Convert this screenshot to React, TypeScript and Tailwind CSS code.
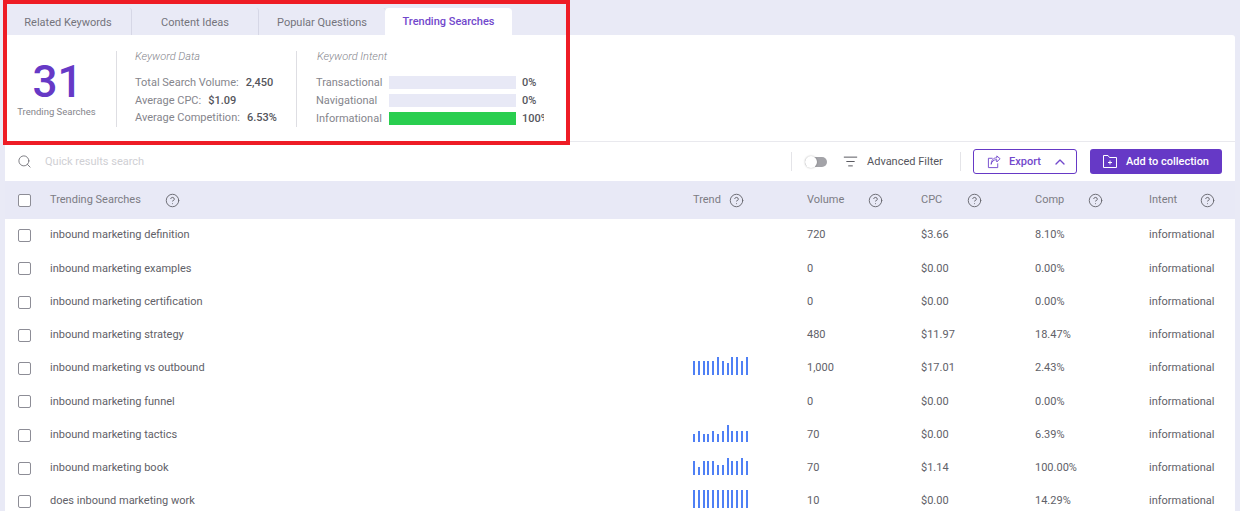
import { ChevronUp, CircleHelp, ListFilter, Search } from "lucide-react"
import type { ReactElement } from "react"

const tabs: string[] = ["Related Keywords", "Content Ideas", "Popular Questions"]

const rows: { name: string, bars: number[], volume: string, cpc: string, comp: string }[] = [
  { name: "inbound marketing definition", bars: [], volume: "720", cpc: "$3.66", comp: "8.10%" },
  { name: "inbound marketing examples", bars: [], volume: "0", cpc: "$0.00", comp: "0.00%" },
  { name: "inbound marketing certification", bars: [], volume: "0", cpc: "$0.00", comp: "0.00%" },
  { name: "inbound marketing strategy", bars: [], volume: "480", cpc: "$11.97", comp: "18.47%" },
  { name: "inbound marketing vs outbound", bars: [14, 14, 14, 14, 14, 18, 14, 12, 18, 18, 14, 18], volume: "1,000", cpc: "$17.01", comp: "2.43%" },
  { name: "inbound marketing funnel", bars: [], volume: "0", cpc: "$0.00", comp: "0.00%" },
  { name: "inbound marketing tactics", bars: [8, 11, 8, 8, 11, 8, 11, 17, 11, 11, 11, 11], volume: "70", cpc: "$0.00", comp: "6.39%" },
  { name: "inbound marketing book", bars: [14, 8, 14, 14, 14, 10, 10, 17, 14, 14, 17, 14], volume: "70", cpc: "$1.14", comp: "100.00%" },
  { name: "does inbound marketing work", bars: [18, 18, 18, 18, 18, 18, 18, 18, 18, 18, 18, 18], volume: "10", cpc: "$0.00", comp: "14.29%" },
]

const intents: { label: string, value: string, fill: string }[] = [
  { label: "Transactional", value: "0%", fill: "bg-[#e8e9f6]" },
  { label: "Navigational", value: "0%", fill: "bg-[#e8e9f6]" },
  { label: "Informational", value: "100%", fill: "bg-[#29ce4f]" },
]

function Help({ className }: { className: string }): ReactElement {
  return <CircleHelp size={15} strokeWidth={1.5} className={`text-[#66666e] ${className}`} />
}

function Checkbox(): ReactElement {
  return <span className="block w-[13px] h-[13px] rounded-[2px] border border-[#8d8d96] bg-white"></span>
}

function ExportIcon(): ReactElement {
  return (
    <svg width="14" height="14" viewBox="0 0 15 15" fill="none" stroke="currentColor" strokeWidth="1">
      <path d="M6 3.5H1.5V13.5H11.5V9" />
      <path d="M4.5 10C5 7 7 5 10.5 5V7.5L14 4L10.5 1V3C6.5 3 4.5 6 4.5 10Z" strokeLinejoin="round" />
    </svg>
  )
}

function FolderIcon(): ReactElement {
  return (
    <svg width="14" height="13" viewBox="0 0 14 13" fill="none" stroke="currentColor" strokeWidth="1">
      <path d="M0.5 12.5V0.5H5L6.5 2.5H13.5V12.5Z" />
      <path d="M7 5.5V9.5M5 7.5H9" />
    </svg>
  )
}

export default function App(): ReactElement {
  return (
    <div className="relative w-[1240px] h-[511px] overflow-hidden bg-[#e9eaf6] px-[5px] font-['Roboto',sans-serif] text-[11px] text-[#616168]">
      <div className="flex h-[35px] pt-[8px]">
        {tabs.map((tab) => (
          <div key={tab} className="w-[127px] flex items-center justify-center pt-[3px] text-[#74747c] border-r border-[#d6d7e6] rounded-t-[3px]">{tab}</div>
        ))}
        <div className="w-[127px] flex items-center justify-center pt-[1px] bg-white rounded-t-[4px] font-medium text-[#7248cc] ml-[-1px]">Trending Searches</div>
      </div>

      <div className="bg-white h-[476px] rounded-tr-[3px]">
        <section className="flex h-[107px] border-b border-[#e9e9ee] pt-[16px]">
          <div className="w-[111px] h-[76px] pr-[8px] flex flex-col items-center">
            <div className="text-[44px] leading-[44px] mt-[9px] ml-[2px] font-medium text-[#6639c6]">31</div>
            <div className="text-[9.5px] leading-[12px] mt-[2px] text-[#85858c]">Trending Searches</div>
          </div>
          <div className="w-[180px] h-[76px] border-l border-[#dedee3] pl-[18px]">
            <div className="italic font-light leading-[12px] text-[#85858c] mb-[11px]">Keyword Data</div>
            <div className="leading-[17.5px] text-[#85858c]">Total Search Volume:<span className="font-medium text-[#55555c] ml-[7px]">2,450</span></div>
            <div className="leading-[17.5px] text-[#85858c]">Average CPC:<span className="font-medium text-[#55555c] ml-[7px]">$1.09</span></div>
            <div className="leading-[17.5px] text-[#85858c]">Average Competition:<span className="font-medium text-[#55555c] ml-[7px]">6.53%</span></div>
          </div>
          <div className="w-[248px] h-[76px] border-l border-[#dedee3] pl-[20px] overflow-hidden">
            <div className="italic font-light leading-[12px] text-[#85858c] mb-[13px]">Keyword Intent</div>
            <div className="flex flex-col gap-[5px]">
              {intents.map((intent) => (
                <div key={intent.label} className="flex items-center h-[13px] ml-[-1px]">
                  <span className="w-[73px] shrink-0 pt-[1px] text-[#85858c]">{intent.label}</span>
                  <span className={`w-[127px] shrink-0 h-[13px] ${intent.fill}`}></span>
                  <span className="ml-[6px] shrink-0 pt-[1px] font-medium text-[#55555c]">{intent.value}</span>
                </div>
              ))}
            </div>
          </div>
        </section>

        <div className="flex items-center h-[39px] px-[13px]">
          <Search size={15} strokeWidth={1.5} className="ml-[-1px] text-[#77777e]" />
          <span className="ml-[13px] pt-[1px] text-[#cfcfd4]">Quick results search</span>
          <span className="ml-auto h-[19px] border-l border-[#e4e4e8]"></span>
          <span className="relative ml-[13px] w-[22px] h-[10px] rounded-full bg-[#a3a3a8]">
            <span className="absolute left-0 top-[-1px] w-[12px] h-[12px] rounded-full bg-white shadow-[0_0_2px_rgba(0,0,0,0.3)]"></span>
          </span>
          <ListFilter size={15} strokeWidth={1.5} className="ml-[16px] text-[#4f4f56]" />
          <span className="ml-[9px] w-[76px] pt-[1px] text-[#55555c]">Advanced Filter</span>
          <span className="ml-[17px] h-[19px] border-l border-[#e4e4e8]"></span>
          <button className="ml-[12px] w-[104px] h-[25px] flex items-center pl-[13px] border border-[#6639c6] rounded-[3px] text-[#7248cc] font-medium">
            <ExportIcon />
            <span className="ml-[8px] pt-[1px]">Export</span>
            <ChevronUp size={16} strokeWidth={2} className="ml-[11px]" />
          </button>
          <button className="ml-[13px] w-[132px] h-[25px] flex items-center pl-[13px] bg-[#6639c6] rounded-[3px] text-white font-medium">
            <FolderIcon />
            <span className="ml-[9px] pt-[1px]">Add to collection</span>
          </button>
        </div>

        <div className="grid grid-cols-[32px_643px_114px_114px_114px_114px_1fr] items-center h-[38px] pl-[13px] bg-[#e8e9f6] text-[#7c7c84]">
          <Checkbox />
          <div className="flex items-center">Trending Searches<Help className="ml-[24px]" /></div>
          <div className="flex items-center">Trend<Help className="ml-[8px]" /></div>
          <div className="flex items-center">Volume<Help className="ml-[24px]" /></div>
          <div className="flex items-center">CPC<Help className="ml-[25px]" /></div>
          <div className="flex items-center">Comp<Help className="ml-[24px]" /></div>
          <div className="flex items-center">Intent<Help className="ml-[23px]" /></div>
        </div>

        {rows.map((row) => (
          <div key={row.name} className="grid grid-cols-[32px_643px_114px_114px_114px_114px_1fr] items-center h-[33.25px] pl-[13px]">
            <Checkbox />
            <div>{row.name}</div>
            <div className="flex items-end gap-[2.8px] h-[18px] mb-[5px]">
              {row.bars.map((height, i) => (
                <span key={i} className="w-[2px] bg-[#4f80f5]" style={{ height }}></span>
              ))}
            </div>
            <div>{row.volume}</div>
            <div>{row.cpc}</div>
            <div>{row.comp}</div>
            <div>informational</div>
          </div>
        ))}
      </div>

      {/* annotation drawn over the screenshot */}
      <div className="absolute left-[3px] top-0 w-[567px] h-[145px] border-[4px] border-[#ee1c25]"></div>
    </div>
  )
}
